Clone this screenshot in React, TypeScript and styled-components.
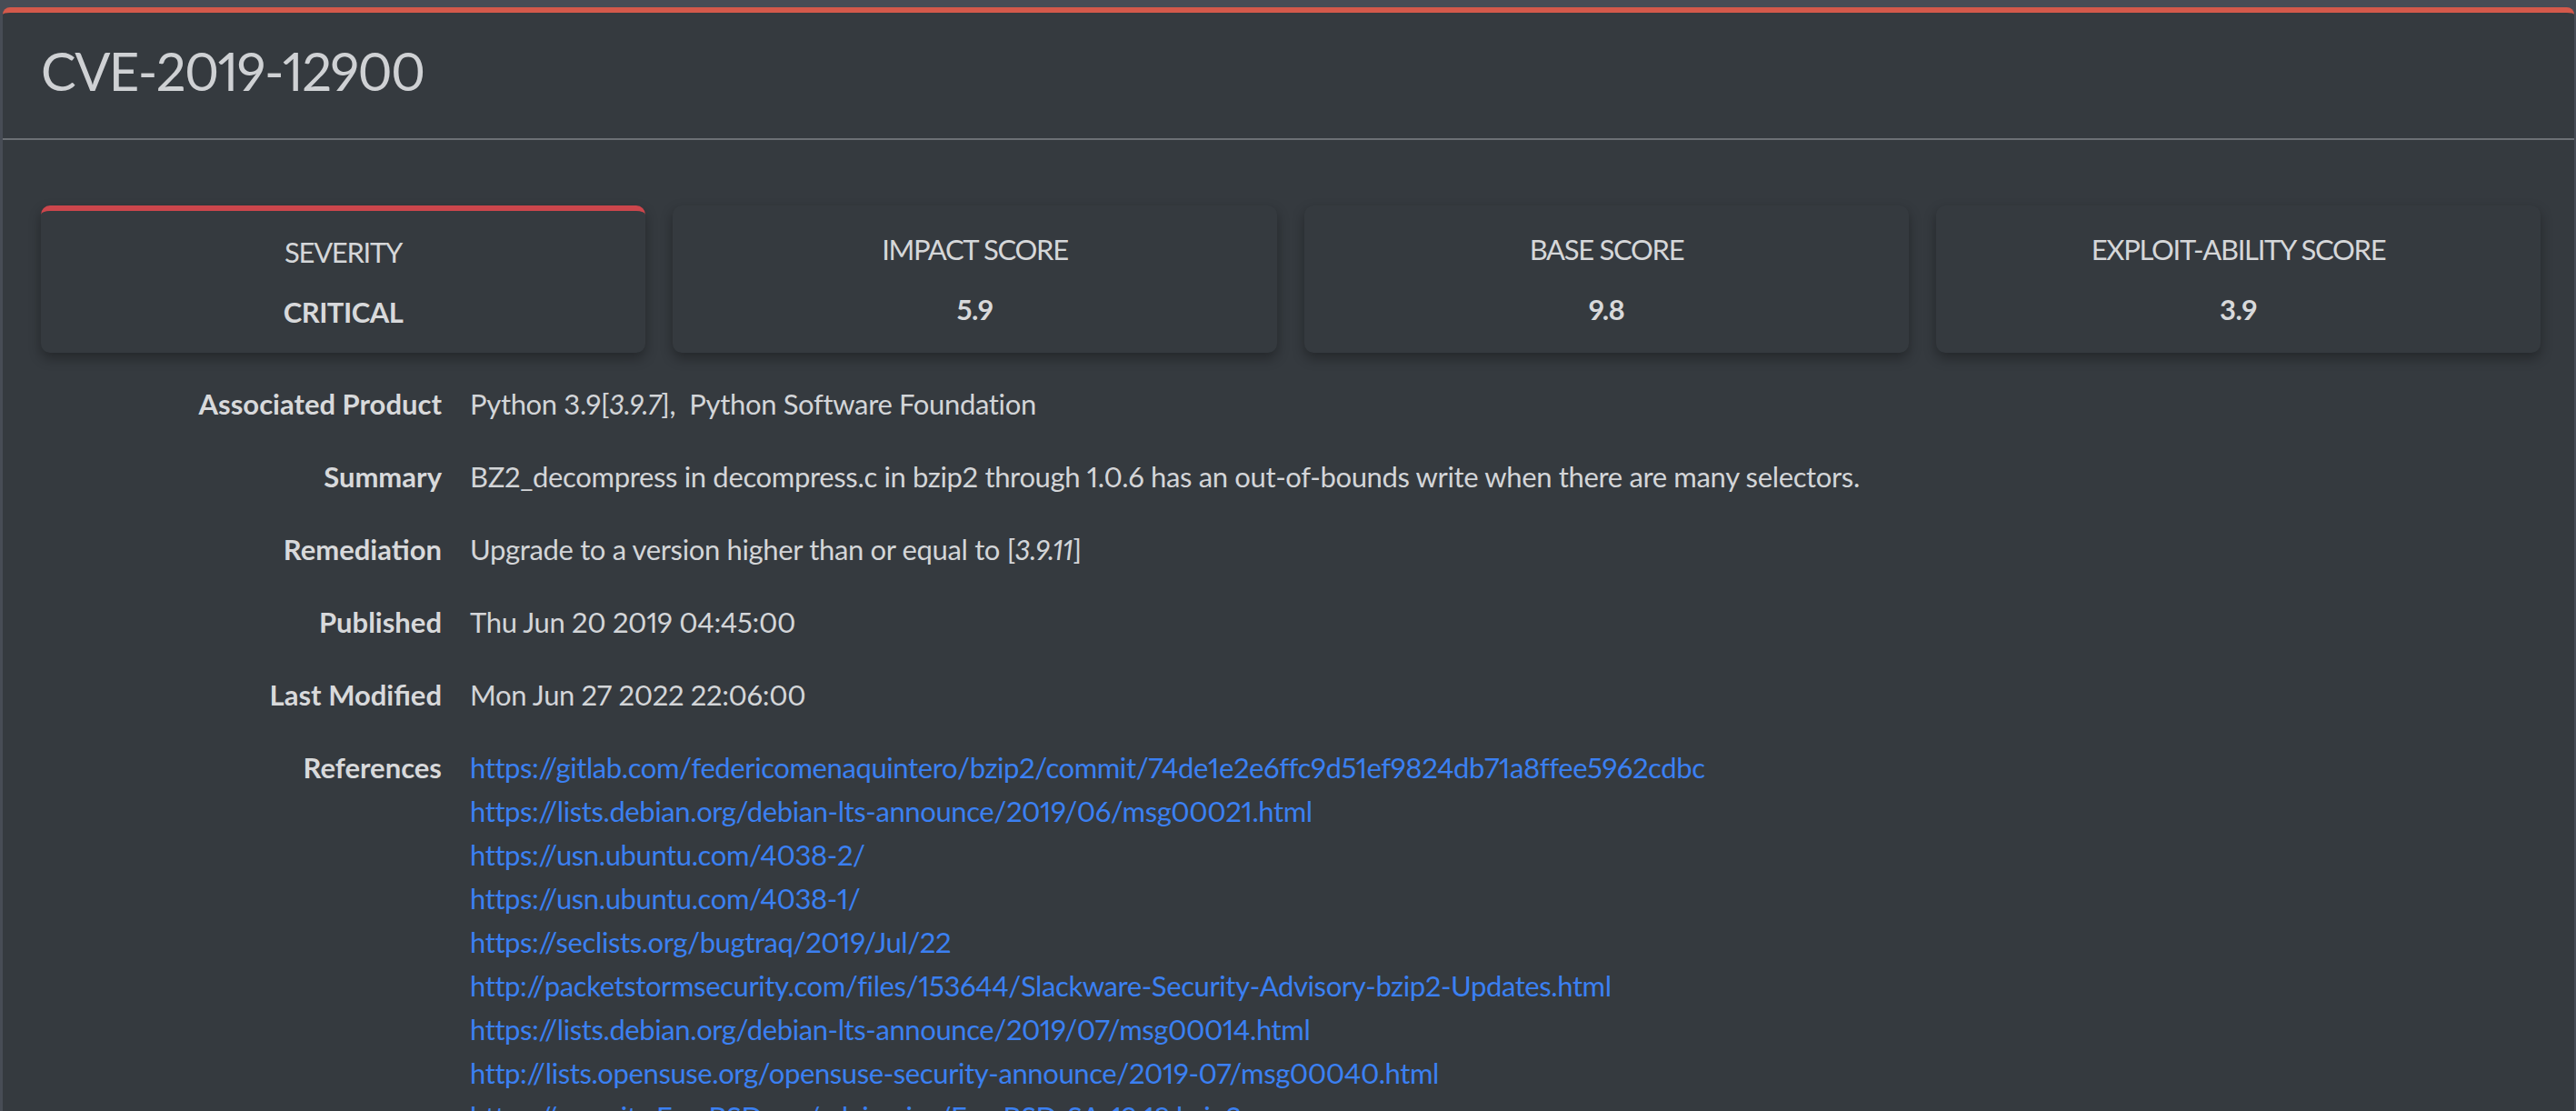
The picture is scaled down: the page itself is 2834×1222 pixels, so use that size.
import React from 'react';
import styled, { createGlobalStyle } from 'styled-components';

const GlobalStyle = createGlobalStyle`
  html, body {
    margin: 0;
    background: #474c55;
  }
  body {
    padding: 8px 2px 0 3px;
    font-family: Lato, "Noto Sans", sans-serif;
    font-variant-numeric: proportional-nums;
    color: #d3d5d8;
  }
`;

const Panel = styled.main`
  background: #353a3f;
  border-top: 6px solid #d4594b;
  border-radius: 8px 8px 0 0;
  min-height: 1300px;
`;

const Header = styled.header`
  height: 140px;
  box-sizing: border-box;
  display: flex;
  align-items: center;
  padding: 0 42px 12px;
  border-bottom: 2px solid #6c7075;
`;

const Title = styled.h1`
  margin: 0;
  font-size: 58px;
  font-weight: 400;
  letter-spacing: -1.6px;
  color: #cfd1d4;
`;

const Body = styled.section`
  padding: 72px 37px 0 42px;
`;

const StatGrid = styled.div`
  display: grid;
  grid-template-columns: repeat(4, 1fr);
  column-gap: 30px;
`;

const StatCard = styled.div<{ $accent?: boolean }>`
  height: 162px;
  box-sizing: border-box;
  border-radius: 10px;
  background: #353a3f;
  box-shadow: 0 6px 14px rgba(0, 0, 0, 0.32);
  border-top: ${p => (p.$accent ? '6px solid #cc464c' : '0')};
  display: flex;
  flex-direction: column;
  align-items: center;
  justify-content: center;
  gap: 18px;
  font-size: 31px;
  line-height: 48px;
`;

const StatLabel = styled.div`
  text-transform: uppercase;
  letter-spacing: -1.3px;
  color: #d5d7d9;
`;

const StatValue = styled.div`
  font-weight: 700;
  letter-spacing: -0.5px;
  color: #d8d9db;
`;

const Details = styled.dl`
  margin: 32px 0 0;
  font-size: 31px;
  line-height: 48px;
`;

const Row = styled.div`
  display: grid;
  grid-template-columns: 441px 1fr;
  column-gap: 31px;
  margin-bottom: 32px;
`;

const Label = styled.dt`
  text-align: right;
  font-weight: 700;
  color: #d8d9db;
`;

const Value = styled.dd`
  margin: 0;
  letter-spacing: -0.35px;
  color: #d3d5d8;
`;

const LinkList = styled.dd`
  margin: 0;
  display: flex;
  flex-direction: column;
  letter-spacing: -0.4px;
`;

const RefLink = styled.a`
  color: #3b80f2;
  text-decoration: none;
  white-space: nowrap;
`;

const stats = [
  { label: 'Severity', value: 'CRITICAL', accent: true },
  { label: 'Impact Score', value: '5.9' },
  { label: 'Base Score', value: '9.8' },
  { label: 'Exploit-ability Score', value: '3.9' },
];

const references = [
  'https://gitlab.com/federicomenaquintero/bzip2/commit/74de1e2e6ffc9d51ef9824db71a8ffee5962cdbc',
  'https://lists.debian.org/debian-lts-announce/2019/06/msg00021.html',
  'https://usn.ubuntu.com/4038-2/',
  'https://usn.ubuntu.com/4038-1/',
  'https://seclists.org/bugtraq/2019/Jul/22',
  'http://packetstormsecurity.com/files/153644/Slackware-Security-Advisory-bzip2-Updates.html',
  'https://lists.debian.org/debian-lts-announce/2019/07/msg00014.html',
  'http://lists.opensuse.org/opensuse-security-announce/2019-07/msg00040.html',
  'https://security.FreeBSD.org/advisories/FreeBSD-SA-19:18.bzip2.asc',
];

export default function App() {
  return (
    <>
      <GlobalStyle />
      <Panel>
        <Header>
          <Title>CVE-2019-12900</Title>
        </Header>
        <Body>
          <StatGrid>
            {stats.map(s => (
              <StatCard key={s.label} $accent={s.accent}>
                <StatLabel>{s.label}</StatLabel>
                <StatValue>{s.value}</StatValue>
              </StatCard>
            ))}
          </StatGrid>
          <Details>
            <Row>
              <Label>Associated Product</Label>
              <Value>
                Python 3.9[<i>3.9.7</i>],&nbsp; Python Software Foundation
              </Value>
            </Row>
            <Row>
              <Label>Summary</Label>
              <Value>
                BZ2_decompress in decompress.c in bzip2 through 1.0.6 has an out-of-bounds write when there are many selectors.
              </Value>
            </Row>
            <Row>
              <Label>Remediation</Label>
              <Value>
                Upgrade to a version higher than or equal to [<i>3.9.11</i>]
              </Value>
            </Row>
            <Row>
              <Label>Published</Label>
              <Value>Thu Jun 20 2019 04:45:00</Value>
            </Row>
            <Row>
              <Label>Last Modified</Label>
              <Value>Mon Jun 27 2022 22:06:00</Value>
            </Row>
            <Row>
              <Label>References</Label>
              <LinkList>
                {references.map(url => (
                  <RefLink key={url} href={url}>
                    {url}
                  </RefLink>
                ))}
              </LinkList>
            </Row>
          </Details>
        </Body>
      </Panel>
    </>
  );
}
